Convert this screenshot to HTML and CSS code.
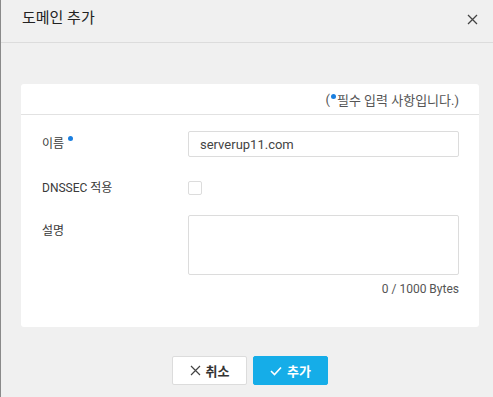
FILE: index.html
```html
<!DOCTYPE html>
<html lang="ko">
<head>
    <meta charset="UTF-8">
    <title>도메인 추가</title>
    <link rel="stylesheet" href="styles.css">
</head>
<body>
    <div class="modal">
        <div class="modal-header">
            <span class="modal-title">도메인 추가</span>
            <svg class="close" width="11" height="11" viewBox="0 0 11 11">
                <path d="M1 1L10 10M10 1L1 10" stroke="#444" stroke-width="1.3" fill="none"/>
            </svg>
        </div>

        <div class="modal-body">
            <div class="card">
                <div class="card-top">(<span class="dot"></span>필수 입력 사항입니다.)</div>

                <div class="card-content">
                    <div class="form-row">
                        <label class="form-label">이름<span class="dot required"></span></label>
                        <input type="text" class="text-input" value="serverup11.com">
                    </div>

                    <div class="form-row row-check">
                        <label class="form-label">DNSSEC 적용</label>
                        <span class="checkbox"></span>
                    </div>

                    <div class="form-row row-area">
                        <label class="form-label">설명</label>
                        <div class="area-wrap">
                            <textarea class="text-area"></textarea>
                            <div class="counter">0 / 1000 Bytes</div>
                        </div>
                    </div>
                </div>
            </div>

            <div class="buttons">
                <button class="btn btn-cancel">
                    <svg width="11" height="11" viewBox="0 0 11 11">
                        <path d="M1 1L10 10M10 1L1 10" stroke="#444" stroke-width="1.2" fill="none"/>
                    </svg>
                    취소
                </button>
                <button class="btn btn-ok">
                    <svg width="12" height="10" viewBox="0 0 12 10">
                        <path d="M1 5L4.5 8.5L11 1.5" stroke="#fff" stroke-width="1.6" fill="none"/>
                    </svg>
                    추가
                </button>
            </div>
        </div>
    </div>
</body>
</html>
```

FILE: styles.css
```css
body {
    margin: 0;
    font-family: Roboto, "Noto Sans CJK KR", sans-serif;
    color: #333;
    background-color: #f0f0f0;
}

/* Modal frame */
.modal {
    height: 397px;
    box-sizing: border-box;
    border-left: 1px solid #8a8a8a;
    background-color: #f0f0f0;
}

.modal-header {
    height: 43px;
    box-sizing: border-box;
    border-bottom: 1px solid #dcdcdc;
    padding: 8px 15px 0 21px;
    display: flex;
    justify-content: space-between;
    align-items: flex-start;
}

.modal-title {
    font-size: 15px;
    line-height: 20px;
    font-weight: 400;
    color: #222;
}

.close {
    margin-top: 6px;
}

.modal-body {
    padding: 41px 14px 0 20px;
}

/* Card */
.card {
    background-color: #fff;
    border-radius: 3px;
}

.card-top {
    height: 30px;
    border-bottom: 1px solid #e2e2e2;
    padding-right: 20px;
    display: flex;
    justify-content: flex-end;
    align-items: center;
    font-size: 13px;
    color: #555;
}

.dot {
    display: inline-block;
    width: 5px;
    height: 5px;
    border-radius: 50%;
    background-color: #1a7fe0;
    margin: 0 1px 5px 1px;
}

.dot.required {
    margin: 0 0 7px 4px;
}

.card-content {
    padding: 16px 20px 30px 21px;
}

.form-row {
    display: flex;
    align-items: center;
}

.form-label {
    width: 146px;
    flex-shrink: 0;
    font-size: 12px;
    line-height: 16px;
    color: #3a3a3a;
}

.text-input {
    flex: 1;
    height: 26px;
    box-sizing: border-box;
    border: 1px solid #dcdcdc;
    border-radius: 2px;
    padding: 0 11px;
    font-family: Roboto, sans-serif;
    font-size: 13px;
    color: #444;
    outline: none;
}

.row-check {
    margin-top: 23px;
}

.checkbox {
    width: 14px;
    height: 14px;
    box-sizing: border-box;
    border: 1px solid #dcdcdc;
    border-radius: 2px;
}

.row-area {
    margin-top: 19px;
    align-items: flex-start;
}

.row-area .form-label {
    margin-top: 8px;
}

.area-wrap {
    flex: 1;
}

.text-area {
    display: block;
    width: 100%;
    height: 60px;
    box-sizing: border-box;
    border: 1px solid #dcdcdc;
    border-radius: 2px;
    resize: none;
    outline: none;
}

.counter {
    margin-top: 6px;
    text-align: right;
    font-size: 12px;
    line-height: 16px;
    color: #555;
}

/* Buttons */
.buttons {
    margin-top: 29px;
    display: flex;
    justify-content: center;
    gap: 6px;
}

.btn {
    width: 75px;
    height: 29px;
    border-radius: 2px;
    font-family: Roboto, "Noto Sans CJK KR", sans-serif;
    font-size: 13px;
    font-weight: 700;
    display: flex;
    align-items: center;
    justify-content: center;
    gap: 5px;
    cursor: pointer;
}

.btn-cancel {
    background-color: #fff;
    border: 1px solid #dcdcdc;
    color: #333;
}

.btn-ok {
    background-color: #15ade8;
    border: 1px solid #15ade8;
    color: #fff;
}
```
